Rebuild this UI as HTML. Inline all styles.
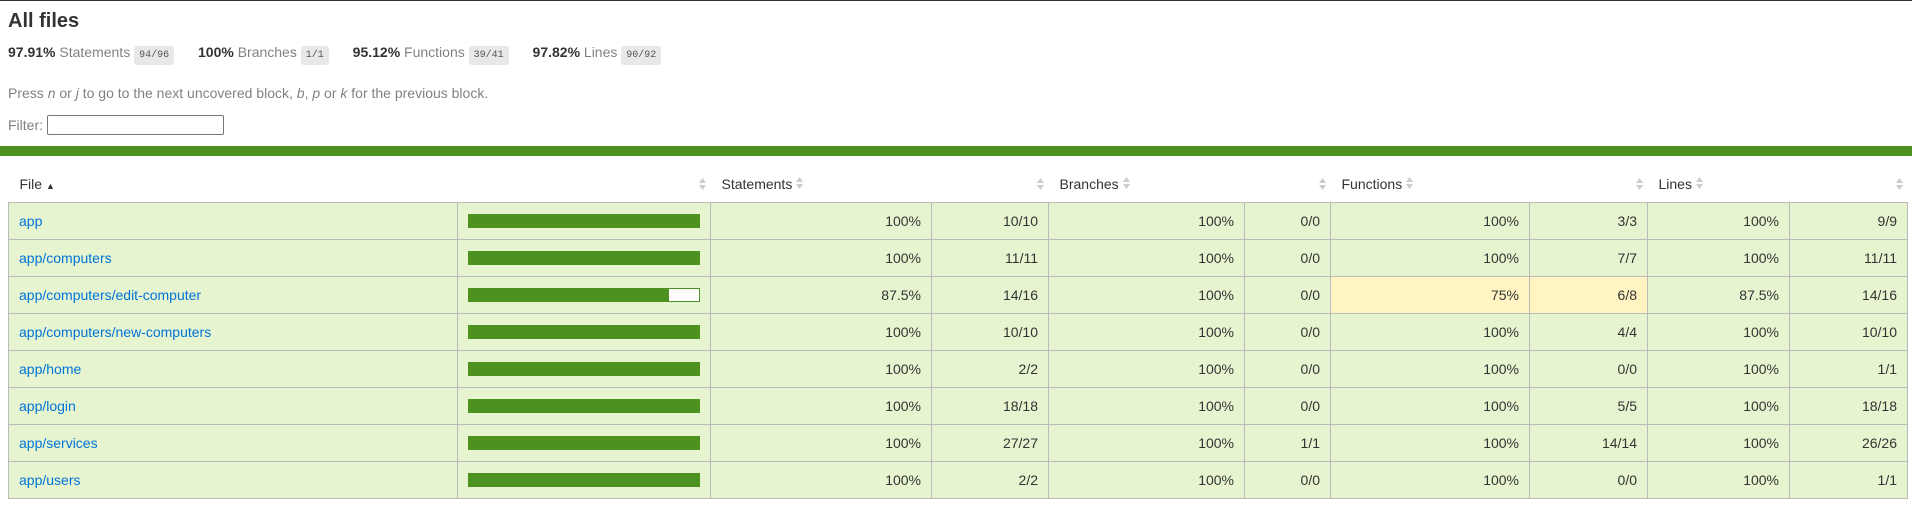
<!DOCTYPE html>
<html><head><meta charset="utf-8"><style>
*{box-sizing:border-box}
body{margin:0;width:1912px;height:518px;background:#fff;font-family:"Liberation Sans",Arial,sans-serif;font-size:14px;color:#333;border-top:1px solid #333;position:relative;overflow:hidden}
h1{position:absolute;left:8px;top:9px;margin:0;font-size:20px;font-weight:bold;color:#333}
.stats{position:absolute;left:8px;top:43px;white-space:nowrap}
.stats span.s{margin-right:20px}
.q{color:rgba(0,0,0,.5)}
.fr{font-family:"Liberation Mono",monospace;font-size:10px;color:#555;background:#e8e8e8;padding:4px 5px;border-radius:3px}
.press{position:absolute;left:8px;top:84px;color:rgba(0,0,0,.5)}
.filter{position:absolute;left:8px;top:116px;color:rgba(0,0,0,.5)}
.inp{position:absolute;left:47px;top:114px;width:177px;height:20px;border:1px solid #767676;border-radius:2px}
.bar{position:absolute;left:0;top:145px;width:1912px;height:10px;background:#4d9221}
table{position:absolute;left:8px;top:165px;border-collapse:collapse;table-layout:fixed;width:1899px}
th{height:36px;font-weight:normal;text-align:left;padding:0 0 0 11px;position:relative;color:#333}
th .so{position:absolute;right:5px;top:12px;width:7px;height:12px}
td{height:37px;border:1px solid #bbb;background:#e6f5d0;padding:0 10px;text-align:right}
td.f{text-align:left;padding-left:10px}
td.f a{color:#0074d9;text-decoration:none}
td.m{background:#fff4c2}
.cb{width:232px;height:14px;border:1px solid #4d9221;background:#fff;margin-left:0}
.cb div{height:100%;background:#4d9221}
td.b{padding:0 0 0 10px}
</style></head><body>
<h1>All files</h1>
<div class="stats"><span class="s"><b>97.91%</b> <span class="q">Statements</span> <span class="fr">94/96</span></span> <span class="s"><b>100%</b> <span class="q">Branches</span> <span class="fr">1/1</span></span> <span class="s"><b>95.12%</b> <span class="q">Functions</span> <span class="fr">39/41</span></span> <span class="s"><b>97.82%</b> <span class="q">Lines</span> <span class="fr">90/92</span></span></div>
<div class="press">Press <i>n</i> or <i>j</i> to go to the next uncovered block, <i>b</i>, <i>p</i> or <i>k</i> for the previous block.</div>
<div class="filter">Filter:</div><div class="inp"></div>
<div class="bar"></div>
<table>
<colgroup><col style="width:449px"><col style="width:253px"><col style="width:221px"><col style="width:117px"><col style="width:196px"><col style="width:86px"><col style="width:199px"><col style="width:118px"><col style="width:142px"><col style="width:118px"></colgroup>
<tr>
<th>File <span style="font-size:9px">▲</span></th>
<th><svg class="so" viewBox="0 0 7 12"><path d="M0 5L3.5 0L7 5Z M0 7L3.5 12L7 7Z" fill="#ccc"/></svg></th>
<th>Statements <svg viewBox="0 0 7 12" width="7" height="12"><path d="M0 5L3.5 0L7 5Z M0 7L3.5 12L7 7Z" fill="#ccc"/></svg></th>
<th><svg class="so" viewBox="0 0 7 12"><path d="M0 5L3.5 0L7 5Z M0 7L3.5 12L7 7Z" fill="#ccc"/></svg></th>
<th>Branches <svg viewBox="0 0 7 12" width="7" height="12"><path d="M0 5L3.5 0L7 5Z M0 7L3.5 12L7 7Z" fill="#ccc"/></svg></th>
<th><svg class="so" viewBox="0 0 7 12"><path d="M0 5L3.5 0L7 5Z M0 7L3.5 12L7 7Z" fill="#ccc"/></svg></th>
<th>Functions <svg viewBox="0 0 7 12" width="7" height="12"><path d="M0 5L3.5 0L7 5Z M0 7L3.5 12L7 7Z" fill="#ccc"/></svg></th>
<th><svg class="so" viewBox="0 0 7 12"><path d="M0 5L3.5 0L7 5Z M0 7L3.5 12L7 7Z" fill="#ccc"/></svg></th>
<th>Lines <svg viewBox="0 0 7 12" width="7" height="12"><path d="M0 5L3.5 0L7 5Z M0 7L3.5 12L7 7Z" fill="#ccc"/></svg></th>
<th><svg class="so" viewBox="0 0 7 12"><path d="M0 5L3.5 0L7 5Z M0 7L3.5 12L7 7Z" fill="#ccc"/></svg></th>
</tr>
<tr><td class="f"><a>app</a></td><td class="b"><div class="cb"><div style="width:100%"></div></div></td><td>100%</td><td>10/10</td><td>100%</td><td>0/0</td><td>100%</td><td>3/3</td><td>100%</td><td>9/9</td></tr>
<tr><td class="f"><a>app/computers</a></td><td class="b"><div class="cb"><div style="width:100%"></div></div></td><td>100%</td><td>11/11</td><td>100%</td><td>0/0</td><td>100%</td><td>7/7</td><td>100%</td><td>11/11</td></tr>
<tr><td class="f"><a>app/computers/edit-computer</a></td><td class="b"><div class="cb"><div style="width:87%"></div></div></td><td>87.5%</td><td>14/16</td><td>100%</td><td>0/0</td><td class="m">75%</td><td class="m">6/8</td><td>87.5%</td><td>14/16</td></tr>
<tr><td class="f"><a>app/computers/new-computers</a></td><td class="b"><div class="cb"><div style="width:100%"></div></div></td><td>100%</td><td>10/10</td><td>100%</td><td>0/0</td><td>100%</td><td>4/4</td><td>100%</td><td>10/10</td></tr>
<tr><td class="f"><a>app/home</a></td><td class="b"><div class="cb"><div style="width:100%"></div></div></td><td>100%</td><td>2/2</td><td>100%</td><td>0/0</td><td>100%</td><td>0/0</td><td>100%</td><td>1/1</td></tr>
<tr><td class="f"><a>app/login</a></td><td class="b"><div class="cb"><div style="width:100%"></div></div></td><td>100%</td><td>18/18</td><td>100%</td><td>0/0</td><td>100%</td><td>5/5</td><td>100%</td><td>18/18</td></tr>
<tr><td class="f"><a>app/services</a></td><td class="b"><div class="cb"><div style="width:100%"></div></div></td><td>100%</td><td>27/27</td><td>100%</td><td>1/1</td><td>100%</td><td>14/14</td><td>100%</td><td>26/26</td></tr>
<tr><td class="f"><a>app/users</a></td><td class="b"><div class="cb"><div style="width:100%"></div></div></td><td>100%</td><td>2/2</td><td>100%</td><td>0/0</td><td>100%</td><td>0/0</td><td>100%</td><td>1/1</td></tr>
</table>
</body></html>
